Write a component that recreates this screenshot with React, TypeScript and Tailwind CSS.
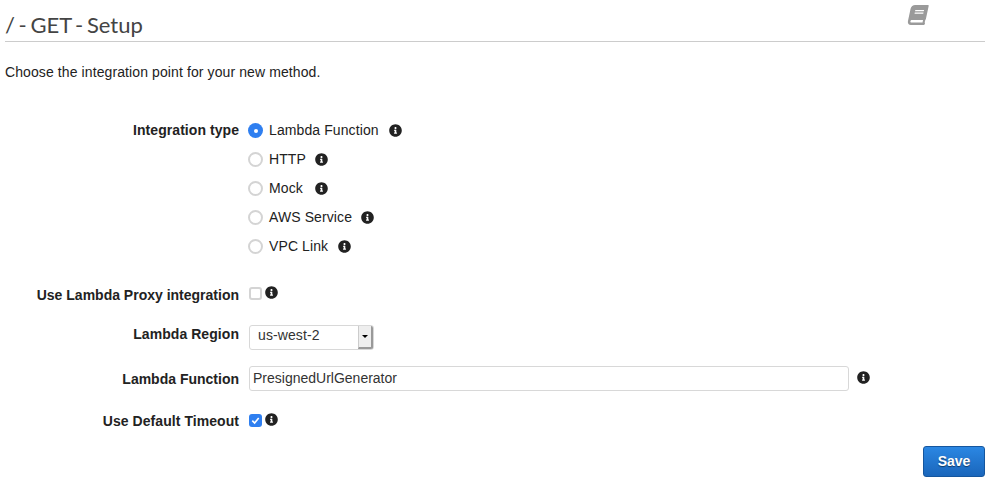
import type { ReactNode } from "react";
import { FaBook, FaInfoCircle } from "react-icons/fa";

const Info = ({ className = "" }: { className?: string }) => (
  <FaInfoCircle className={"text-[13px] text-[#222] shrink-0 " + className} />
);

const Radio = ({ label, gap, checked = false }: { label: string; gap: string; checked?: boolean }) => (
  <div className="h-[29px] flex items-center">
    {checked ? (
      <span className="w-[15px] h-[15px] rounded-full bg-[#2f7ff0] flex items-center justify-center shrink-0">
        <span className="w-[4px] h-[4px] rounded-full bg-white" />
      </span>
    ) : (
      <span className="w-[15px] h-[15px] rounded-full border-2 border-[#d4d4d4] bg-white shrink-0" />
    )}
    <span className="ml-[6px] text-[14px] tracking-[0.1px] text-[#222]">{label}</span>
    <Info className={gap} />
  </div>
);

const Row = ({ label, className = "", labelClass = "", children }: { label: string; className?: string; labelClass?: string; children: ReactNode }) => (
  <div className={"flex " + className}>
    <div className={"w-[239px] text-right font-bold text-[14px] text-[#222] shrink-0 " + labelClass}>{label}</div>
    <div className="ml-[10px] flex-1 flex items-center">{children}</div>
  </div>
);

export default function App() {
  return (
    <div className="relative w-[993px] h-[499px] bg-white font-['Liberation_Sans',Arial,sans-serif] overflow-hidden">
      <div className="mx-[5px] w-[980px] h-[42px] border-b border-[#cccccc] pt-[10px]">
        <h1 className="font-['Lato',sans-serif] text-[22px] leading-[30px] text-[#444] [word-spacing:-2px]">/ - GET - Setup</h1>
      </div>
      <FaBook className="absolute left-[908px] top-[5px] text-[20px] text-[#9a9a9a] -skew-x-12" />
      <p className="ml-[5px] mt-[22px] text-[14px] leading-[16px] tracking-[0.1px] text-[#222]">Choose the integration point for your new method.</p>

      <div className="mt-[36px]">
        <div className="flex">
          <div className="w-[239px] text-right font-bold text-[14px] tracking-[0.06px] text-[#222] pt-[4px] shrink-0">Integration type</div>
          <div className="ml-[9px]">
            <Radio label="Lambda Function" checked gap="ml-[10px]" />
            <Radio label="HTTP" gap="ml-[9px]" />
            <Radio label="Mock" gap="ml-[12px]" />
            <Radio label="AWS Service" gap="ml-[9px]" />
            <Radio label="VPC Link" gap="ml-[10px]" />
          </div>
        </div>

        <Row label="Use Lambda Proxy integration" className="mt-[24px] h-[16px]">
          <span className="w-[13px] h-[13px] rounded-[3px] border-2 border-[#d4d4d4] bg-white" />
          <Info className="ml-[3px] -mt-[2px]" />
        </Row>

        <Row label="Lambda Region" labelClass="tracking-[0.06px]" className="mt-[20px] h-[26px] items-center">
          <div className="w-[125px] h-[25px] mt-[6px] rounded-[3px] border border-[#d8d8d8] flex items-stretch bg-white">
            <span className="flex-1 pl-[8px] text-[14px] leading-[19px] tracking-[0.1px] text-[#333]">us-west-2</span>
            <span className="w-[15px] bg-[#eeeeee] border-r-2 border-b-2 border-l border-[#999] border-l-[#ccc] flex items-center justify-center rounded-r-[2px]">
              <span className="w-0 h-0 border-x-[3px] border-x-transparent border-t-[3px] border-t-black" />
            </span>
          </div>
        </Row>

        <Row label="Lambda Function" className="mt-[19px] h-[26px] items-center">
          <input
            readOnly
            value="PresignedUrlGenerator"
            className="w-[600px] h-[25px] -mt-[2px] rounded-[3px] border border-[#d8d8d8] px-[3px] text-[14px] text-[#333] outline-none"
          />
          <Info className="ml-[8px] -mt-[3px]" />
        </Row>

        <Row label="Use Default Timeout" labelClass="tracking-[0.06px] -mt-[1px]" className="mt-[20px] h-[16px]">
          <span className="w-[13px] h-[13px] rounded-[3px] bg-[#2f7ff0] flex items-center justify-center">
            <svg viewBox="0 0 12 12" className="w-[11px] h-[11px]" fill="none" stroke="white" strokeWidth="1.8">
              <path d="M2.5 6.2 L5 8.7 L9.5 3.2" />
            </svg>
          </span>
          <Info className="ml-[3px] -mt-[2px]" />
        </Row>
      </div>

      <div className="flex justify-end mr-[8px] mt-[18px]">
        <button className="w-[62px] h-[31px] rounded-[3px] border border-[#15569e] bg-gradient-to-b from-[#2b87e3] to-[#1a66bb] text-white font-bold text-[14px] [text-shadow:0_1px_1px_rgba(0,0,0,0.5)]">
          Save
        </button>
      </div>
    </div>
  );
}
